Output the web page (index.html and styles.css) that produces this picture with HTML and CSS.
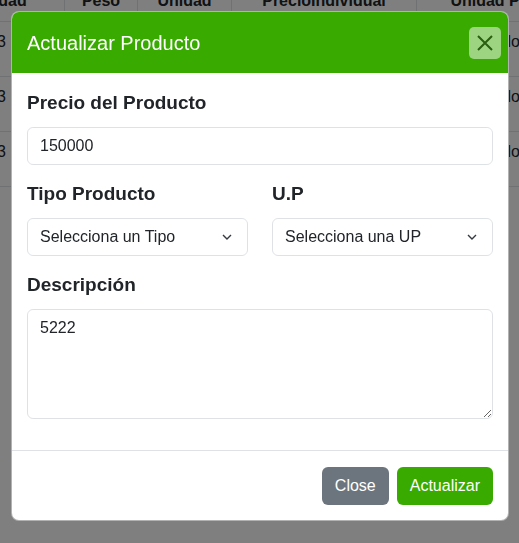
FILE: index.html
```html
<!DOCTYPE html>
<html lang="es">
<head>
<meta charset="utf-8">
<title>Actualizar Producto</title>
<link rel="stylesheet" href="styles.css">
</head>
<body>
<div class="page">
  <table class="data-table">
    <thead>
      <tr>
        <th class="c1">Cantidad</th>
        <th class="c2">Peso</th>
        <th class="c3">Unidad</th>
        <th class="c4">PrecioIndividual</th>
        <th class="c5">Unidad Principal</th>
      </tr>
    </thead>
    <tbody>
      <tr><td class="c1">123</td><td>2</td><td>Kg</td><td>150000</td><td class="c5">Kilo</td></tr>
      <tr><td class="c1">123</td><td>2</td><td>Kg</td><td>150000</td><td class="c5">Kilo</td></tr>
      <tr><td class="c1">123</td><td>2</td><td>Kg</td><td>150000</td><td class="c5">Kilo</td></tr>
    </tbody>
  </table>
</div>

<div class="backdrop">
  <div class="modal">
    <div class="modal-header">
      <h1 class="modal-title">Actualizar Producto</h1>
      <button class="btn-close" type="button" aria-label="Close">
        <svg width="16" height="16" viewBox="0 0 16 16"><path d="M1 1 L15 15 M15 1 L1 15" stroke="currentColor" stroke-width="2" fill="none"/></svg>
      </button>
    </div>
    <div class="modal-body">
      <div class="group">
        <label class="label">Precio del Producto</label>
        <input class="control" type="text" value="150000">
      </div>
      <div class="row">
        <div class="group">
          <label class="label">Tipo Producto</label>
          <div class="control select">
            <span>Selecciona un Tipo</span>
            <svg class="chev" width="10" height="6" viewBox="0 0 10 6"><path d="M1 1 L5 5 L9 1" stroke="#343a40" stroke-width="1.4" fill="none"/></svg>
          </div>
        </div>
        <div class="group">
          <label class="label">U.P</label>
          <div class="control select">
            <span>Selecciona una UP</span>
            <svg class="chev" width="10" height="6" viewBox="0 0 10 6"><path d="M1 1 L5 5 L9 1" stroke="#343a40" stroke-width="1.4" fill="none"/></svg>
          </div>
        </div>
      </div>
      <div class="group last">
        <label class="label">Descripción</label>
        <textarea class="control textarea">5222</textarea>
      </div>
    </div>
    <div class="modal-footer">
      <button class="btn btn-secondary" type="button">Close</button>
      <button class="btn btn-success" type="button">Actualizar</button>
    </div>
  </div>
</div>
</body>
</html>
```

FILE: styles.css
```css
* { box-sizing: border-box; }

html, body {
  margin: 0;
  padding: 0;
  height: 100%;
  overflow: hidden;
  background: #fff;
  font-family: "Liberation Sans", Arial, sans-serif;
  color: #212529;
}

.page {
  margin-top: -20px;
  margin-left: -80px;
}

.data-table {
  border-collapse: collapse;
  font-size: 16px;
  line-height: 24px;
  table-layout: fixed;
  width: 690px;
}

.data-table th,
.data-table td {
  border: 1px solid #dee2e6;
  padding: 8px;
  text-align: center;
  vertical-align: top;
}

.data-table th { font-weight: 700; height: 40px; }
.data-table td { height: 55px; }
.data-table td.c5 { padding-right: 22px; }

.c1 { width: 144px; }
.c2 { width: 73px; }
.c3 { width: 94px; }
.c4 { width: 185px; }
.c5 { width: 194px; }

.backdrop {
  position: fixed;
  inset: 0;
  background: rgba(0, 0, 0, 0.5);
  padding: 11px 10px 0 11px;
}

.modal {
  width: 498px;
  background: #fff;
  border: 1px solid rgba(0, 0, 0, 0.3);
  border-radius: 8px;
  overflow: hidden;
}

.modal-header {
  background: #38aa00;
  display: flex;
  align-items: center;
  justify-content: space-between;
  padding: 15px 7px 15px 15px;
  height: 61px;
}

.modal-title {
  margin: 0;
  font-size: 20px;
  font-weight: 400;
  line-height: 30px;
  color: #fff;
}

.btn-close {
  width: 32px;
  height: 32px;
  border: 0;
  border-radius: 5px;
  background: #9dd482;
  color: #2a5e10;
  display: flex;
  align-items: center;
  justify-content: center;
  padding: 0;
}

.modal-body {
  padding: 16px 15px 16px 15px;
}

.group { margin-bottom: 15px; }
.group.last { margin-bottom: 15px; }

.row {
  display: grid;
  grid-template-columns: 1fr 1fr;
  column-gap: 24px;
}

.label {
  display: block;
  font-size: 19px;
  font-weight: 700;
  line-height: 27px;
  margin-bottom: 11px;
  color: #212529;
}

.control {
  display: block;
  width: 100%;
  height: 38px;
  border: 1px solid #dee2e6;
  border-radius: 6px;
  padding: 6px 12px;
  font-family: "Liberation Sans", Arial, sans-serif;
  font-size: 16px;
  line-height: 24px;
  color: #212529;
  background: #fff;
  outline: none;
}

.select {
  display: flex;
  align-items: center;
  justify-content: space-between;
  padding-right: 15px;
}

.chev { display: block; }

.textarea {
  height: 110px;
  resize: vertical;
}

.modal-footer {
  border-top: 1px solid #dee2e6;
  display: flex;
  justify-content: flex-end;
  gap: 8px;
  padding: 16px 15px 15px 15px;
}

.btn {
  height: 38px;
  border: 0;
  border-radius: 6px;
  padding: 6px 13px;
  font-family: "Liberation Sans", Arial, sans-serif;
  font-size: 16px;
  line-height: 24px;
  color: #fff;
}

.btn-secondary { background: #6c757d; }
.btn-success { background: #38aa00; }
```
